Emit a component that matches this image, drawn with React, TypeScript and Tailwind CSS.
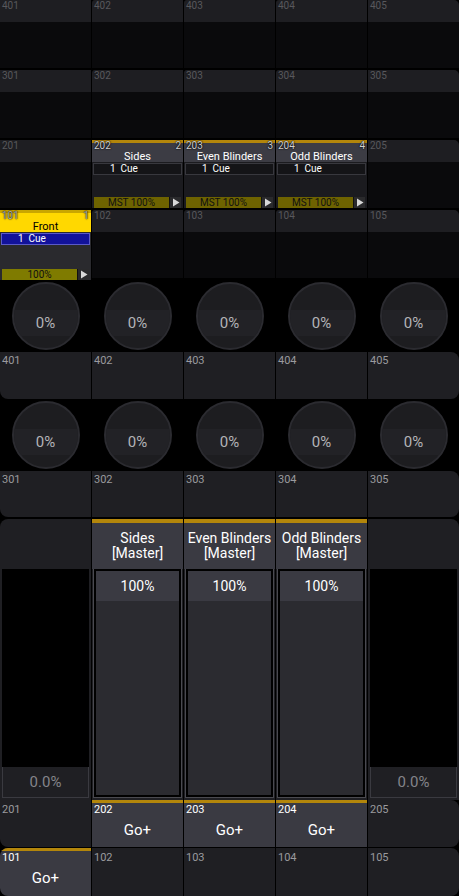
import React from 'react';

const GOLD = 'bg-[#b3860b]';

interface PoolItem {
  num: number;
  name?: string;
  idx?: number;
  selected?: boolean;
}

const poolRows: PoolItem[][] = [
  [{ num: 401 }, { num: 402 }, { num: 403 }, { num: 404 }, { num: 405 }],
  [{ num: 301 }, { num: 302 }, { num: 303 }, { num: 304 }, { num: 305 }],
  [
    { num: 201 },
    { num: 202, name: 'Sides', idx: 2 },
    { num: 203, name: 'Even Blinders', idx: 3 },
    { num: 204, name: 'Odd Blinders', idx: 4 },
    { num: 205 },
  ],
  [{ num: 101, name: 'Front', idx: 1, selected: true }, { num: 102 }, { num: 103 }, { num: 104 }, { num: 105 }],
];

const Arrow = () => (
  <div className="w-[12px] h-full bg-[#2a2a2c] flex items-center justify-center border-l border-[#111]">
    <svg width="8" height="9" viewBox="0 0 8 9">
      <path d="M1 0.5 L7.5 4.5 L1 8.5 Z" fill="#d8d8d8" />
    </svg>
  </div>
);

const PoolCell: React.FC<{ item: PoolItem; col: number }> = ({ item, col }) => {
  const edge = col === 4 ? 'rounded-tr-[5px]' : col === 0 ? '' : 'rounded-tl-[3px]';
  if (!item.name) {
    return (
      <div className="h-[68px] flex flex-col">
        <div className={`h-[22px] bg-[#1e1e22] ${edge} text-[10px] leading-[12px] text-[#58585c] pl-[2px]`}>
          {item.num}
        </div>
        <div className="flex-1 bg-[#0a0a0c]" />
      </div>
    );
  }
  const sel = item.selected;
  return (
    <div className={`flex flex-col ${sel ? 'bg-[#2a2a2e] h-[70px]' : 'bg-[#1b1b1f] h-[68px]'}`}>
      <div className={`h-[3px] ${sel ? 'bg-[#c9a600]' : GOLD}`} />
      <div className={`h-[19px] relative ${sel ? 'bg-[#ffd800]' : 'bg-[#3c3c44]'}`}>
        <span
          className={`absolute left-[2px] top-[-3px] text-[10px] leading-[12px] [text-shadow:0_0_2px_#000,0_0_1px_#000] ${
            sel ? 'text-[#b0b0b0]' : 'text-[#d0d0d0]'
          }`}
        >
          {item.num}
        </span>
        <span
          className={`absolute right-[2px] top-[-3px] text-[10px] leading-[12px] [text-shadow:0_0_2px_#000,0_0_1px_#000] ${
            sel ? 'text-[#b0b0b0]' : 'text-[#d0d0d0]'
          }`}
        >
          {item.idx}
        </span>
        <div
          className={`absolute left-0 right-0 bottom-0 text-center text-[11px] leading-[11px] ${
            sel ? 'text-black' : 'text-white'
          }`}
        >
          {item.name}
        </div>
      </div>
      <div
        className={`mx-px mt-px h-[12px] border text-[10px] leading-[10px] text-white pl-[16px] ${
          sel ? 'bg-[#12129a] border-[#5a5ac8]' : 'bg-[#141417] border-[#38383e]'
        }`}
      >
        1&nbsp;&nbsp;Cue
      </div>
      <div className="flex-1" />
      <div className="mx-[2px] mb-0 h-[11px] flex">
        <div
          className={`flex-1 text-center text-[10px] leading-[11px] text-[#111] ${
            sel ? 'bg-[#7f7b00]' : 'bg-[#6e6300]'
          }`}
        >
          {sel ? '100%' : 'MST 100%'}
        </div>
        <Arrow />
      </div>
    </div>
  );
};

const Knob = () => (
  <div className="flex items-center justify-center h-[72px]">
    <div className="w-[68px] h-[68px] rounded-full border-2 border-[#2b2b30] bg-[#1d1d20] overflow-hidden flex flex-col">
      <div className="h-[26px]" />
      <div className="h-[26px] bg-[#222226] flex items-center justify-center text-[15px] text-[#b4b4b8]">0%</div>
      <div className="flex-1" />
    </div>
  </div>
);

const ExecRow: React.FC<{ base: number; h: string }> = ({ base, h }) => (
  <div className={`grid grid-cols-5 gap-px ${h}`}>
    {[1, 2, 3, 4, 5].map((i) => (
      <div
        key={i}
        className={`bg-[#1f1f23] text-[11px] leading-[13px] text-[#9a9a9e] pl-[2px] pt-[2px] ${
          i === 1 ? 'rounded-bl-[8px]' : ''
        } ${i === 5 ? 'rounded-r-[8px]' : ''}`}
      >
        {base + i}
      </div>
    ))}
  </div>
);

const faders = [null, 'Sides', 'Even Blinders', 'Odd Blinders', null];

const EmptyFader: React.FC<{ left: boolean }> = ({ left }) => (
  <div className={`flex flex-col bg-[#1f1f23] ${left ? 'rounded-tl-[8px]' : 'rounded-tr-[8px]'}`}>
    <div className="h-[50px]" />
    <div className="mx-[2px] flex-1 bg-black" />
    <div className="mx-[2px] h-[31px] border border-t-0 border-[#3a3a40] flex items-center justify-center text-[15px] text-[#84848a]">
      0.0%
    </div>
    <div className="h-[2px]" />
  </div>
);

const MasterFader: React.FC<{ name: string }> = ({ name }) => (
  <div className="flex flex-col bg-[#1f1f23]">
    <div className={`h-[4px] ${GOLD}`} />
    <div className="h-[46px] bg-[#3a3a42] flex flex-col items-center justify-center text-white text-[14px] leading-[15px]">
      <span>{name}</span>
      <span>[Master]</span>
    </div>
    <div className="flex-1 ml-px mr-px mb-[2px] border border-[#4a4a50] border-t-0">
      <div className="h-full border-2 border-black bg-[#2b2b30] flex flex-col">
        <div className="h-[30px] bg-[#3a3a42] flex items-center justify-center text-white text-[14px]">100%</div>
      </div>
    </div>
  </div>
);

const GoCell: React.FC<{ num: number; active: boolean; cls?: string }> = ({ num, active, cls = '' }) =>
  active ? (
    <div className={`flex flex-col bg-[#3a3a42] ${cls}`}>
      <div className={`h-[3px] ${GOLD}`} />
      <div className="text-[11px] leading-[13px] text-white pl-[2px]">{num}</div>
      <div className="flex-1 flex items-center justify-center text-white text-[15px] pb-[3px]">Go+</div>
    </div>
  ) : (
    <div className={`bg-[#1f1f23] text-[11px] leading-[13px] text-[#9a9a9e] pl-[2px] pt-[3px] ${cls}`}>{num}</div>
  );

export default function App() {
  return (
    <div className="w-[459px] h-[896px] bg-black overflow-hidden font-['Roboto','Liberation_Sans',sans-serif] flex flex-col">
      {/* playback pool */}
      <div className="flex flex-col gap-[2px] h-[280px]">
        {poolRows.map((row, r) => (
          <div key={r} className="grid grid-cols-5 gap-px items-start">
            {row.map((item, c) => (
              <PoolCell key={item.num} item={item} col={c} />
            ))}
          </div>
        ))}
      </div>

      {/* knobs + executors */}
      <div className="grid grid-cols-5 gap-px">
        {[1, 2, 3, 4, 5].map((i) => (
          <Knob key={i} />
        ))}
      </div>
      <ExecRow base={400} h="h-[47px]" />
      <div className="grid grid-cols-5 gap-px">
        {[1, 2, 3, 4, 5].map((i) => (
          <Knob key={i} />
        ))}
      </div>
      <ExecRow base={300} h="h-[46px]" />

      {/* faders */}
      <div className="grid grid-cols-5 gap-px h-[281px] mt-[2px]">
        {faders.map((f, i) => (f ? <MasterFader key={i} name={f} /> : <EmptyFader key={i} left={i === 0} />))}
      </div>

      {/* buttons */}
      <div className="grid grid-cols-5 gap-px h-[47px]">
        <GoCell num={201} active={false} cls="rounded-bl-[8px]" />
        <GoCell num={202} active />
        <GoCell num={203} active />
        <GoCell num={204} active />
        <GoCell num={205} active={false} cls="rounded-r-[8px]" />
      </div>
      <div className="grid grid-cols-5 gap-px h-[48px] mt-px">
        <GoCell num={101} active cls="rounded-l-[8px] overflow-hidden" />
        <GoCell num={102} active={false} />
        <GoCell num={103} active={false} />
        <GoCell num={104} active={false} />
        <GoCell num={105} active={false} cls="rounded-r-[8px]" />
      </div>
    </div>
  );
}
